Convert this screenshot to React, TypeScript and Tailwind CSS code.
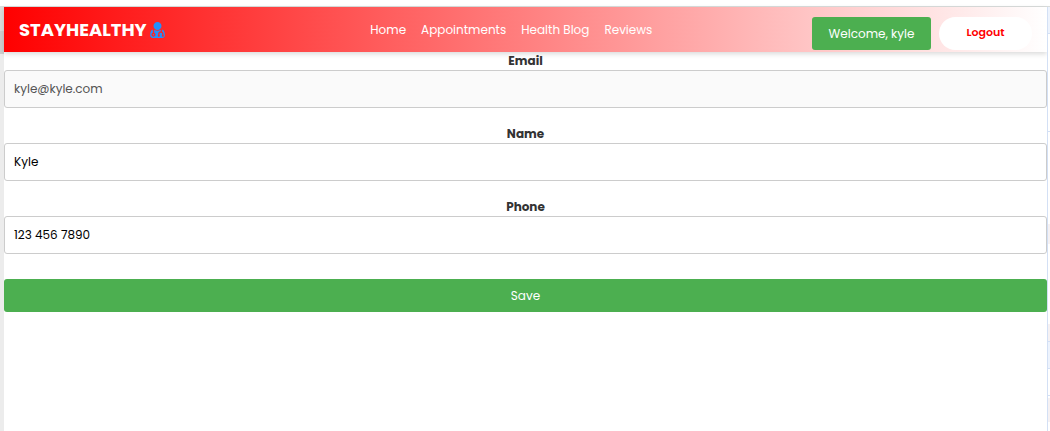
import { useState } from "react";

const links = ["Home", "Appointments", "Health Blog", "Reviews"];

type FieldProps = {
  id: string;
  label: string;
  type: string;
  value: string;
  disabled?: boolean;
  onChange?: (value: string) => void;
};

function DoctorIcon() {
  return (
    <svg viewBox="0 128 1408 1536" className="h-4 w-[15px] fill-[#2190ff]" aria-hidden="true">
      <path d="M384 1344q0 26-19 45t-45 19-45-19-19-45 19-45 45-19 45 19 19 45zM1408 1405q0 121-73 190t-194 69h-874q-121 0-194-69t-73-190q0-68 5.500-131t24-138 47.500-132.500 81-103 120-60.500q-22 52-22 120v203q-58 20-93 70t-35 111q0 80 56 136t136 56 136-56 56-136q0-61-35.500-111t-92.500-70v-203q0-62 25-93 132 104 295 104t295-104q25 31 25 93v64q-106 0-181 75t-75 181v89q-32 29-32 71 0 40 28 68t68 28 68-28 28-68q0-42-32-71v-89q0-52 38-90t90-38 90 38 38 90v89q-32 29-32 71 0 40 28 68t68 28 68-28 28-68q0-42-32-71v-89q0-68-34.500-127.500t-93.500-93.500q0-10 .5-42.500t0-48-2.500-41.500-7-47-13-40q68 15 120 60.500t81 103 47.500 132.500 24 138 5.500 131zM1088 512q0 159-112.500 271.500t-271.500 112.500-271.500-112.500-112.500-271.500 112.500-271.500 271.500-112.500 271.500 112.500 112.500 271.500z" />
    </svg>
  );
}

function Field({ id, label, type, value, disabled, onChange }: FieldProps) {
  return (
    <div className="flex flex-col">
      <label htmlFor={id} className="text-center text-[12px] leading-[18px] font-bold text-[#333333]">
        {label}
      </label>
      <input
        id={id}
        type={type}
        value={value}
        disabled={disabled}
        onChange={(e) => onChange?.(e.target.value)}
        className="h-[38px] w-full rounded-[3px] border border-[#cccccc] bg-white px-[9px] text-[12px] text-black outline-none disabled:bg-[#fafafa] disabled:text-[#545454]"
      />
    </div>
  );
}

function Header() {
  return (
    <header className="flex h-[45px] items-center bg-linear-to-r/srgb from-[#ff0000] to-white px-[15px] shadow-[0_2px_5px_rgba(0,0,0,0.15)]">
      <a href="#home" className="flex items-center gap-[3px] text-[18px] leading-5 font-bold text-white">
        STAYHEALTHY
        <DoctorIcon />
      </a>
      <nav className="flex flex-1 justify-center gap-[15px] pl-[46px] text-[12px] text-white">
        {links.map((link) => (
          <a key={link} href="#" className="whitespace-nowrap">
            {link}
          </a>
        ))}
      </nav>
      <div className="flex gap-2 self-end pb-0.5">
        <button type="button" className="h-[33px] w-[119px] rounded-[3px] bg-[#4caf50] text-[12px] text-white">
          Welcome, kyle
        </button>
        <button type="button" className="h-[33px] w-[93px] rounded-full bg-white pb-0.5 text-[11px] font-semibold text-[#ff0000]">
          Logout
        </button>
      </div>
    </header>
  );
}

function LeftEdge() {
  return (
    <div className="flex w-1 flex-col bg-[#ececec]">
      <div className="h-6 bg-[#dadddc]" />
      <div className="h-[23px] bg-[#cecece]" />
    </div>
  );
}

function RightEdge() {
  return (
    <div className="flex w-[3px] flex-col border-l border-[#d3e0f5] bg-white">
      <div className="h-[27px] border-b border-[#d3e0f5] bg-[#edf3fd]" />
      <div className="h-[98px] border-b border-[#d3e0f5]" />
      <div className="mt-[92px] h-5 bg-[#f5f1f3]" />
      <div className="mt-20 h-[17px] bg-[#f5f1f3]" />
      <div className="h-7 border-y border-[#d3e0f5] bg-[#edf3fd]" />
      <div className="h-[27px] border-b border-[#d3e0f5]" />
      <div className="mt-[2px] h-6 bg-[#f5f1f3]" />
    </div>
  );
}

export default function App() {
  const [name, setName] = useState("Kyle");
  const [phone, setPhone] = useState("123 456 7890");

  return (
    <div className="flex min-h-screen flex-col bg-white font-['Poppins','Inter',sans-serif]">
      <div className="h-[7px] border-b border-[#dadddc]" />
      <div className="flex flex-1">
        <LeftEdge />
        <main className="min-w-0 flex-1">
          <Header />
          <form className="flex flex-col gap-[17px]" onSubmit={(e) => e.preventDefault()}>
            <Field id="email" label="Email" type="email" value="kyle@kyle.com" disabled />
            <Field id="name" label="Name" type="text" value={name} onChange={setName} />
            <Field id="phone" label="Phone" type="tel" value={phone} onChange={setPhone} />
            <button type="submit" className="mt-2 h-[33px] rounded-[3px] bg-[#4caf50] text-[12px] text-white">
              Save
            </button>
          </form>
        </main>
        <RightEdge />
      </div>
    </div>
  );
}
